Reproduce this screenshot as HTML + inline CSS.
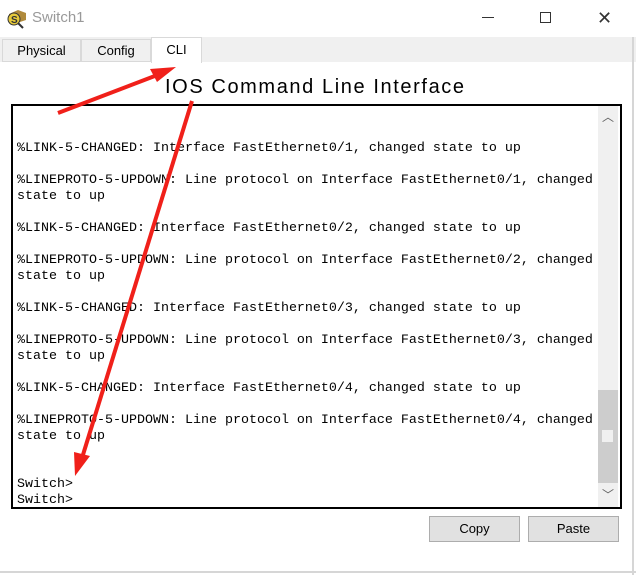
<!DOCTYPE html>
<html><head><style>
*{margin:0;padding:0;box-sizing:border-box}
body{width:636px;height:575px;background:#fff;position:relative;overflow:hidden;font-family:"Liberation Sans",sans-serif}
.abs{position:absolute}
.tab{position:absolute;top:39px;height:23px;border:1px solid #d9d9d9;background:#f0f0f0;font-size:13px;text-align:center;line-height:21px;color:#000}
pre{position:absolute;left:17px;top:141px;font-family:"Liberation Mono","Courier New",monospace;font-size:13.33px;line-height:16px;color:#000}
.btn{position:absolute;top:516px;width:91px;height:26px;background:#e1e1e1;border:1px solid #adadad;font-size:13px;text-align:center;line-height:24px}
</style></head><body>
<div class="abs" style="left:0;top:37px;width:636px;height:25px;background:#f0f0f0"></div>
<div class="abs" style="left:632px;top:37px;width:2px;height:538px;background:#d6d6d6"></div>
<div class="abs" style="left:0;top:571px;width:636px;height:2px;background:#d6d6d6"></div>
<svg class="abs" style="left:6px;top:8px" width="22" height="22" viewBox="0 0 22 22"><path d="M3 6 L12 2 L20 5 L20 12 L11 15 L3 12Z" fill="#b08a3c"/><circle cx="8" cy="11" r="6" fill="#e6c93a" stroke="#333"/><text x="5" y="15" font-size="10" font-weight="bold" fill="#333">S</text><path d="M12 15 L17 20" stroke="#333" stroke-width="2"/></svg>
<div class="abs" style="left:32px;top:9px;font-size:15px;color:#999">Switch1</div>
<div class="abs" style="left:482px;top:17px;width:12px;height:1px;background:#333"></div>
<div class="abs" style="left:540px;top:12px;width:11px;height:11px;border:1px solid #333"></div>
<div class="abs" style="left:597px;top:8px;font-size:18px;color:#333">✕</div>
<div class="tab" style="left:2px;width:79px">Physical</div>
<div class="tab" style="left:81px;width:70px">Config</div>
<div class="tab" style="left:151px;top:37px;height:26px;width:51px;background:#fff;border-bottom:none;line-height:24px">CLI</div>
<div class="abs" style="left:165px;top:77px;width:310px;font-size:20px;line-height:20px;letter-spacing:1.6px;color:#000;white-space:nowrap">IOS Command Line Interface</div>
<div class="abs" style="left:11px;top:104px;width:611px;height:405px;border:2px solid #000;background:#fff"></div>
<div class="abs" style="left:598px;top:106px;width:20px;height:401px;background:#f0f0f0"></div>
<div class="abs" style="left:598px;top:390px;width:20px;height:93px;background:#cdcdcd"></div>
<div class="abs" style="left:602px;top:430px;width:11px;height:12px;background:#f0f0f0"></div>
<div class="abs" style="left:602px;top:108px;font-size:12px;color:#606060">︿</div>
<div class="abs" style="left:602px;top:486px;font-size:12px;color:#606060">﹀</div>
<pre>%LINK-5-CHANGED: Interface FastEthernet0/1, changed state to up

%LINEPROTO-5-UPDOWN: Line protocol on Interface FastEthernet0/1, changed
state to up

%LINK-5-CHANGED: Interface FastEthernet0/2, changed state to up

%LINEPROTO-5-UPDOWN: Line protocol on Interface FastEthernet0/2, changed
state to up

%LINK-5-CHANGED: Interface FastEthernet0/3, changed state to up

%LINEPROTO-5-UPDOWN: Line protocol on Interface FastEthernet0/3, changed
state to up

%LINK-5-CHANGED: Interface FastEthernet0/4, changed state to up

%LINEPROTO-5-UPDOWN: Line protocol on Interface FastEthernet0/4, changed
state to up


Switch&gt;
Switch&gt;</pre>
<div class="btn" style="left:429px">Copy</div>
<div class="btn" style="left:528px">Paste</div>
<svg class="abs" style="left:0;top:0" width="636" height="575">
<path d="M58 113 L160 74" stroke="#f0201a" stroke-width="4"/>
<path d="M176 67 L150 69 L157 82Z" fill="#f0201a"/>
<path d="M192 101 L82 458" stroke="#f0201a" stroke-width="4"/>
<path d="M75 476 L74 452 L90 456Z" fill="#f0201a"/>
</svg>
</body></html>
